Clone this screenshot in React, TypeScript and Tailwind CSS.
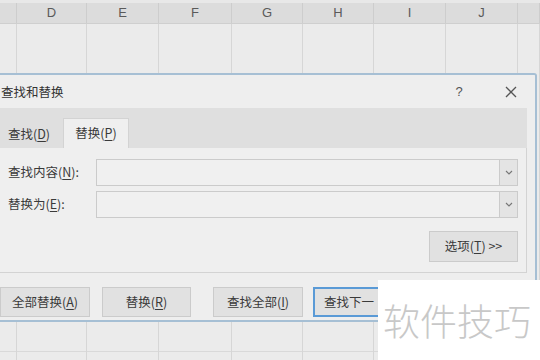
import React from "react";

const cols = [
  { w: 17, l: "" },
  { w: 70, l: "D" },
  { w: 72, l: "E" },
  { w: 73, l: "F" },
  { w: 71, l: "G" },
  { w: 71, l: "H" },
  { w: 72, l: "I" },
  { w: 72, l: "J" },
  { w: 22, l: "" },
];

const cjk = { fontFamily: '"Noto Sans CJK SC", "Noto Sans", sans-serif' };

function U({ c }: { c: string }) {
  return <span className="underline underline-offset-2">{c}</span>;
}

function Btn({ children, cls = "", blue = false }: { children: React.ReactNode; cls?: string; blue?: boolean }) {
  return (
    <div
      className={
        "h-[30px] flex items-center justify-center text-[12.5px] text-[#3a3a3a] bg-[#e1e1e1] " +
        (blue ? "border-2 border-[#5a9ad6] " : "border border-[#cbcbcb] ") +
        cls
      }
    >
      {children}
    </div>
  );
}

function Combo() {
  return (
    <div className="flex-1 h-[27px] border border-[#cbcbcb] bg-[#f0f0f0] flex justify-end">
      <div className="w-[18px] h-full border-l border-[#cbcbcb] bg-[#e4e4e4] flex items-center justify-center">
        <svg width="8" height="5" viewBox="0 0 8 5">
          <path d="M1 1 L4 4 L7 1" fill="none" stroke="#777" strokeWidth="1.1" />
        </svg>
      </div>
    </div>
  );
}

export default function App() {
  return (
    <div className="relative w-[540px] h-[360px] overflow-hidden bg-[#ebebeb]" style={cjk}>
      {/* spreadsheet */}
      <div className="flex flex-col w-full h-full">
        <div className="flex h-[24px] bg-[#dcdcdc] border-b border-[#cfcfcf] border-t-[3px] border-t-[#e8e8e8]">
          {cols.map((c, i) => (
            <div
              key={i}
              className="shrink-0 border-r border-[#cdcdcd] flex items-center justify-center text-[13px] text-[#5a5a5a]"
              style={{ width: c.w, fontFamily: '"Liberation Sans", Arial, sans-serif' }}
            >
              {c.l}
            </div>
          ))}
        </div>
        <div className="flex flex-1">
          {cols.map((c, i) => (
            <div key={i} className="shrink-0 border-r border-[#d6d6d6] flex flex-col" style={{ width: c.w }}>
              <div className="h-[328px] border-b border-[#d9d9d9]" />
            </div>
          ))}
        </div>
      </div>

      {/* dialog */}
      <div className="absolute left-[-10px] top-[73px] w-[547px] h-[249px] bg-[#eeeeee] border-t-2 border-r-2 border-b-2 border-[#a6bfd4] rounded-tr-[3px] flex flex-col text-[#333]">
        <div className="h-[33px] flex items-center text-[12.5px]">
          <div className="pl-[11px] flex-1 pt-[2px]">查找和替换</div>
          <div className="w-[20px] text-center text-[13px] text-[#555] mr-[36px]" style={{ fontFamily: '"Liberation Sans", sans-serif' }}>?</div>
          <svg width="12" height="12" viewBox="0 0 12 12" className="mr-[18px]">
            <path d="M1 1 L11 11 M11 1 L1 11" stroke="#555" strokeWidth="1.3" />
          </svg>
        </div>
        <div className="mx-[8px] flex flex-col">
          <div className="h-[40px] bg-[#dfdfdf] flex items-end">
            <div className="w-[61px] h-[28px] flex items-center pl-[10px] text-[12.5px] text-[#3a3a3a]">
              查找(<U c="D" />)
            </div>
            <div className="ml-[4px] w-[66px] h-[30px] bg-[#efefef] border-t border-x border-[#d3d3d3] flex items-center justify-center text-[12.5px] text-[#3a3a3a]">
              替换(<U c="P" />)
            </div>
          </div>
          <div className="h-[125px] bg-[#efefef] border border-[#d3d3d3] border-t-0 pl-[9px] pr-[8px] pt-[11px] flex flex-col">
            <div className="flex items-center h-[27px]">
              <div className="w-[88px] text-[12.5px] text-[#3a3a3a]">
                查找内容(<U c="N" />):
              </div>
              <Combo />
            </div>
            <div className="flex items-center h-[27px] mt-[5px]">
              <div className="w-[88px] text-[12.5px] text-[#3a3a3a]">
                替换为(<U c="E" />):
              </div>
              <Combo />
            </div>
            <div className="flex justify-end mt-[13px]">
              <Btn cls="w-[89px] h-[31px]">
                选项(<U c="T" />)&nbsp;&gt;&gt;
              </Btn>
            </div>
          </div>
        </div>
        <div className="flex mt-[14px] pl-[10px]">
          <Btn cls="w-[90px]">
            全部替换(<U c="A" />)
          </Btn>
          <Btn cls="w-[89px] ml-[12px]">
            替换(<U c="R" />)
          </Btn>
          <Btn cls="w-[90px] ml-[22px]">
            查找全部(<U c="I" />)
          </Btn>
          <Btn cls="w-[92px] ml-[10px] justify-start pl-[9px]" blue>
            <span className="w-[54px] overflow-hidden whitespace-nowrap">查找下一</span>
          </Btn>
        </div>
      </div>

      {/* watermark */}
      <div className="absolute left-[378px] top-[280px] w-[162px] h-[80px] bg-white flex items-center pl-[5px]">
        <span className="text-[37px] font-light text-[#c8c8c8] leading-none" style={cjk}>
          软件技巧
        </span>
      </div>
    </div>
  );
}
